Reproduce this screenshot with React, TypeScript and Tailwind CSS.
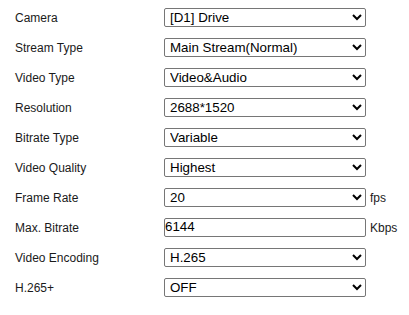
import React from "react";

const rows: { label: string; value: string; type: "select" | "input"; unit?: string }[] = [
  { label: "Camera", value: "[D1] Drive", type: "select" },
  { label: "Stream Type", value: "Main Stream(Normal)", type: "select" },
  { label: "Video Type", value: "Video&Audio", type: "select" },
  { label: "Resolution", value: "2688*1520", type: "select" },
  { label: "Bitrate Type", value: "Variable", type: "select" },
  { label: "Video Quality", value: "Highest", type: "select" },
  { label: "Frame Rate", value: "20", type: "select", unit: "fps" },
  { label: "Max. Bitrate", value: "6144", type: "input", unit: "Kbps" },
  { label: "Video Encoding", value: "H.265", type: "select" },
  { label: "H.265+", value: "OFF", type: "select" },
];

export default function App() {
  return (
    <div
      className="w-[409px] h-[315px] bg-white pt-[2px] pl-[15px] text-[12px] text-[#1a1a1a]"
      style={{ fontFamily: '"Liberation Sans", Arial, sans-serif' }}
    >
      {rows.map((r) => (
        <div key={r.label} className="flex items-center h-[30px]">
          <div className="w-[149px] shrink-0 pt-[2px]">{r.label}</div>
          {r.type === "select" ? (
            <select
              defaultValue={r.value}
              className="w-[202px] h-[19px] border border-[#767676] rounded-[2px] bg-white text-[13.333px] text-black pl-[1px]"
            >
              <option value={r.value}>{r.value}</option>
            </select>
          ) : (
            <input
              defaultValue={r.value}
              className="w-[202px] h-[19px] border border-[#767676] rounded-[2px] bg-white text-[13.333px] text-black px-0"
            />
          )}
          {r.unit && <span className="ml-[4px] pt-[2px]">{r.unit}</span>}
        </div>
      ))}
    </div>
  );
}
